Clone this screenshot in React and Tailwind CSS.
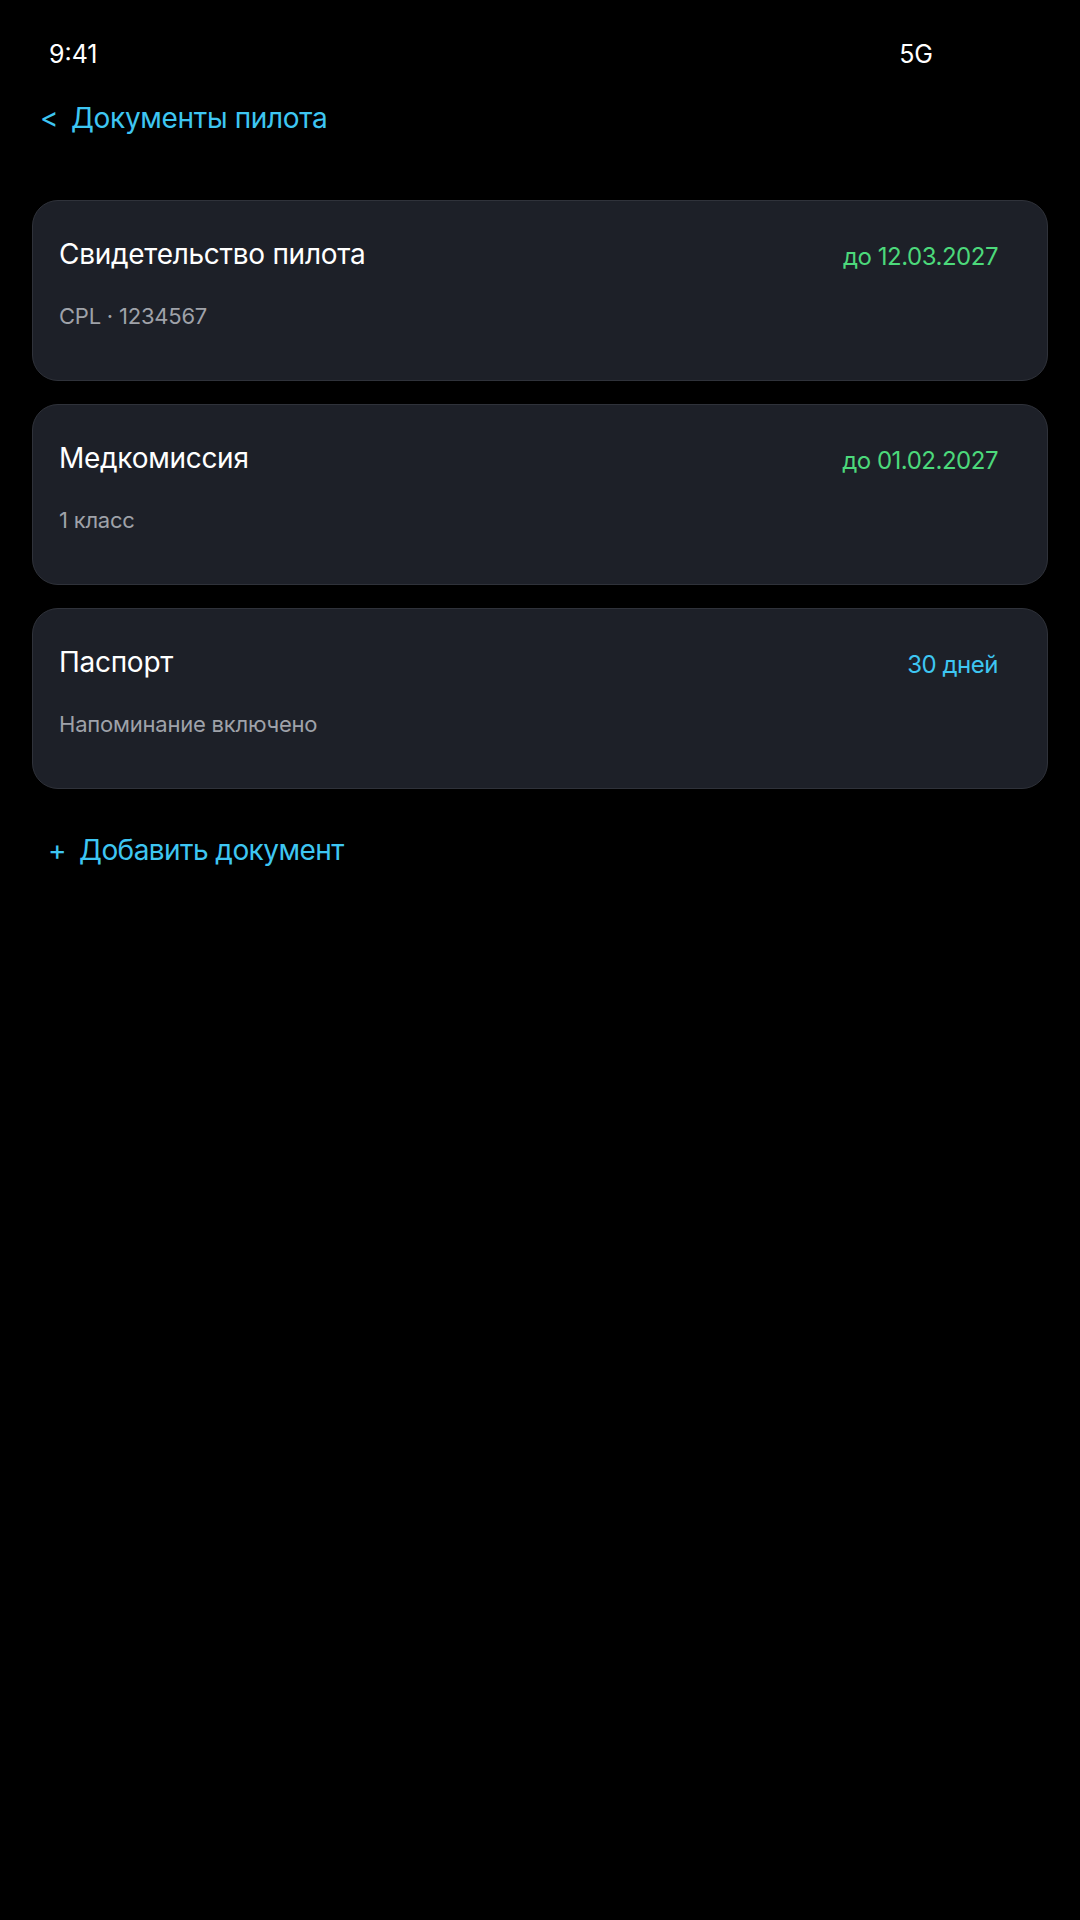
export default function App() {
  const cards = [
    { title: "Свидетельство пилота", sub: "CPL · 1234567", right: "до 12.03.2027", color: "text-[#4cd97b]" },
    { title: "Медкомиссия", sub: "1 класс", right: "до 01.02.2027", color: "text-[#4cd97b]" },
    { title: "Паспорт", sub: "Напоминание включено", right: "30 дней", color: "text-[#3ec6f2]" },
  ];
  return (
    <div className="min-h-[1920px] w-[1080px] bg-black text-white" style={{ fontFamily: "Inter, 'Noto Sans', sans-serif" }}>
      <div className="flex h-[70px] items-start justify-between pt-[38px]">
        <span className="ml-[49px] text-[25px] leading-[32px] text-white">9:41</span>
        <span className="mr-[147px] text-[25px] leading-[32px] text-white">5G</span>
      </div>
      <div className="mt-[30px] flex items-center pl-[40px] text-[28px] leading-[36px] tracking-[-0.012em] text-[#3ec6f2]">
        <span className="w-[31px]">&lt;</span>
        <span>Документы пилота</span>
      </div>
      <div className="mx-[32px] mt-[64px] flex flex-col gap-[23px]">
        {cards.map((c) => (
          <div key={c.title} className="flex h-[181px] items-start justify-between rounded-[26px] border border-[#2f323a] bg-[#1d2028] pl-[26px] pr-[49px] pt-[36px]">
            <div className="flex flex-col">
              <span className="text-[28px] leading-[34px] tracking-[-0.01em] text-white">{c.title}</span>
              <span className="mt-[30px] text-[22px] leading-[30px] tracking-[-0.01em] text-[#9fa2a9]">{c.sub}</span>
            </div>
            <span className={`mt-[3px] text-[24px] leading-[34px] tracking-[-0.02em] ${c.color}`}>{c.right}</span>
          </div>
        ))}
      </div>
      <div className="mt-[44px] flex items-center pl-[48px] text-[28px] leading-[34px] tracking-[-0.02em] text-[#3ec6f2]">
        <span className="w-[31px]">+</span>
        <span>Добавить документ</span>
      </div>
    </div>
  );
}
